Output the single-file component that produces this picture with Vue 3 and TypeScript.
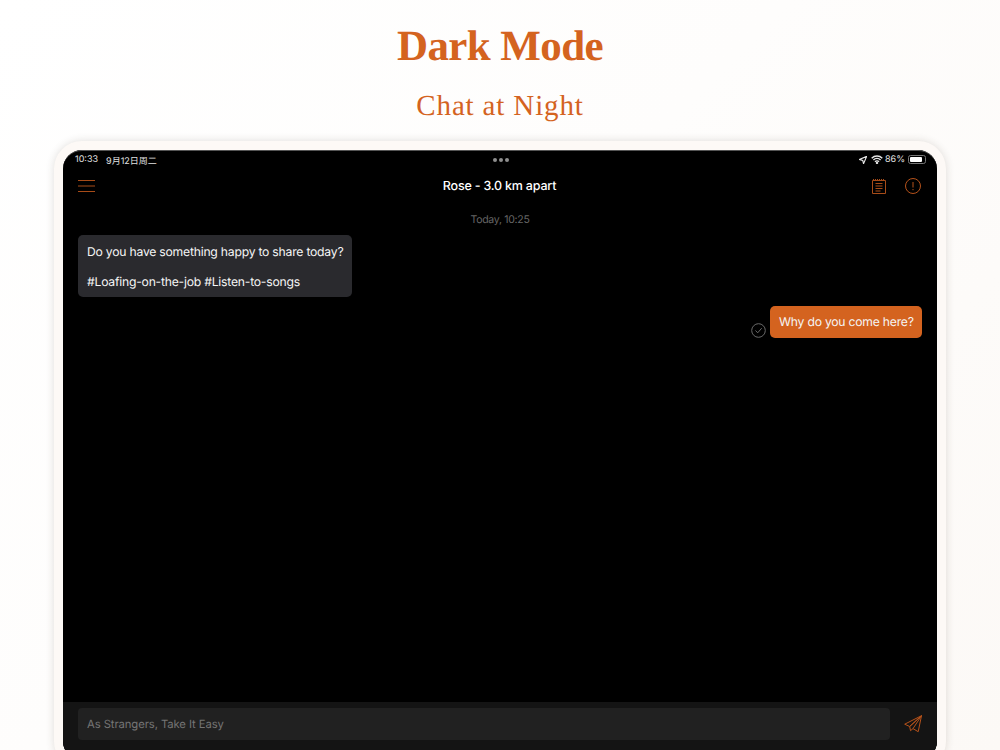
<script setup lang="ts">
const title = 'Dark Mode'
const subtitle = 'Chat at Night'
</script>

<template>
  <div class="page">
    <h1 class="title">{{ title }}</h1>
    <h2 class="subtitle">{{ subtitle }}</h2>
    <div class="device">
      <div class="screen">
        <div class="status">
          <span class="status-left"><span>10:33</span><span>9月12日周二</span></span>
          <span class="dots"><i></i><i></i><i></i></span>
          <span class="status-right">
            <svg width="8" height="8" viewBox="0 0 9 9"><path d="M8.600.4.500 4l3.700.9.900 3.700z" fill="none" stroke="#e6e6e6" stroke-width="1.300"/></svg>
            <svg class="wifi" width="12" height="9" viewBox="0 0 12 9" fill="none" stroke="#e6e6e6" stroke-width="1.400"><path d="M.7 3.200a7.600 7.600 0 0 1 10.600 0M2.400 5a5.200 5.200 0 0 1 7.200 0M4 6.700a2.800 2.800 0 0 1 4 0"/><circle cx="6" cy="8" r=".5" fill="#e6e6e6"/></svg>
            <span class="pct">86%</span>
            <span class="battery"><span class="battery-fill"></span></span>
          </span>
        </div>
        <header class="nav">
          <svg class="menu" width="17" height="12" viewBox="0 0 17 12" stroke="#a84c18" stroke-width="1"><path d="M0 .5h17M0 6h17M0 11.500h17"/></svg>
          <div class="nav-title">Rose - 3.0 km apart</div>
          <div class="nav-actions">
            <svg width="14" height="15" viewBox="0 0 14 15" fill="none" stroke="#a84c18" stroke-width="1"><path d="M.5 1.500h13v13H.5z"/><path d="M1 .5h12" stroke-dasharray="1 1"/><path d="M3.500 4.500h7M3.500 7h7M3.500 9.500h7M3.500 12h5"/></svg>
            <svg width="16" height="16" viewBox="0 0 16 16" fill="none" stroke="#b5521b" stroke-width="1"><circle cx="8" cy="8" r="7.500"/><path d="M8 4v5.500M8 11v1.200"/></svg>
          </div>
        </header>
        <div class="time">Today, 10:25</div>
        <main class="messages">
          <div class="bubble left">
            <p>Do you have something happy to share today?</p>
            <p>#Loafing-on-the-job #Listen-to-songs</p>
          </div>
          <div class="sent">
            <svg class="check" width="15" height="15" viewBox="0 0 15 15" fill="none" stroke="#6a6a6a" stroke-width="1"><circle cx="7.500" cy="7.500" r="6.800"/><path d="M4.500 7.500l2.200 2.300 4-4.600"/></svg>
            <div class="bubble right">Why do you come here?</div>
          </div>
        </main>
        <footer class="composer">
          <div class="input">As Strangers, Take It Easy</div>
          <svg class="send" width="18" height="18" viewBox="0 0 18 18" fill="none" stroke="#b5521b" stroke-width="1"><path d="M17.500.7.700 9.200l5 2.300zM17.500.7l-3.300 16-5.200-3.100zM17.500.7 5.700 11.500l.8 4.200 2.500-2.100"/></svg>
        </footer>
      </div>
    </div>
  </div>
</template>

<style>
html, body { margin: 0; height: 100%; overflow: hidden; }
</style>

<style scoped>
.page {
  width: 1000px;
  height: 750px;
  overflow: hidden;
  display: flex;
  flex-direction: column;
  align-items: center;
  background: linear-gradient(135deg, #ffffff 0%, #fefdfc 45%, #fcf9f6 100%);
  text-rendering: geometricPrecision;
}
.title {
  margin: 22px 0 0;
  font: 700 43px/50px "Liberation Serif", serif;
  color: #d4631f;
  letter-spacing: -0.6px;
}
.subtitle {
  margin: 14px 0 0;
  font: 400 29px/40px "Liberation Serif", serif;
  color: #d4631f;
  letter-spacing: 0.85px;
}
.device {
  margin-top: 15px;
  width: 874px;
  height: 610px;
  flex: none;
  border: 9px solid #fdf9f6;
  border-radius: 28px;
  background: #000;
  box-shadow: 0 0 8px rgba(60, 50, 40, 0.16);
}
.screen {
  height: 100%;
  border-radius: 19px;
  overflow: hidden;
  background: #000;
  display: flex;
  flex-direction: column;
  font-family: Inter, "Noto Sans CJK SC", sans-serif;
  border-top: 1px solid #555;
  box-sizing: border-box;
}
.status {
  flex: none;
  height: 17px;
  padding: 0 11px 0 12px;
  display: grid;
  grid-template-columns: 1fr auto 1fr;
  align-items: center;
  color: #e0e0e0;
  font-size: 9px;
}
.status-left { display: flex; gap: 8px; padding-top: 1px; }
.dots { display: flex; gap: 2px; }
.dots i { width: 4px; height: 4px; border-radius: 50%; background: #8e8e8e; }
.status-right { display: flex; gap: 3px; align-items: center; justify-content: flex-end; }
.wifi { margin-right: -1px; margin-left: 1px; }
.battery {
  width: 18px;
  height: 9px;
  padding: 1px;
  box-sizing: border-box;
  border: 1px solid #777;
  border-radius: 2.500px;
  display: flex;
}
.battery-fill { width: 86%; background: #fff; border-radius: 1px; }
.nav {
  flex: none;
  height: 36px;
  padding: 0 16px 0 15px;
  display: grid;
  grid-template-columns: 1fr auto 1fr;
  align-items: center;
}
.nav-title { color: #fff; font-size: 12.500px; font-weight: 500; letter-spacing: -0.2px; padding-top: 1px; }
.nav-actions { display: flex; justify-content: flex-end; align-items: center; gap: 19px; }
.time {
  flex: none;
  margin-top: 9px;
  text-align: center;
  color: #666;
  font-size: 10.500px;
  line-height: 14px;
  letter-spacing: -0.3px;
}
.messages {
  flex: 1;
  padding: 8px 15px 0;
  display: flex;
  flex-direction: column;
}
.bubble {
  border-radius: 5px;
  color: #f5f5f5;
  font-size: 12.200px;
  line-height: 16px;
  letter-spacing: -0.23px;
}
.bubble p { margin: 0; }
.bubble p + p { margin-top: 13.500px; }
.left {
  align-self: flex-start;
  width: 274px;
  box-sizing: border-box;
  padding: 9px 0 7.500px 9px;
  background: #2a2a2e;
  white-space: nowrap;
}
.sent {
  margin-top: 9px;
  display: flex;
  justify-content: flex-end;
  align-items: flex-end;
  gap: 4px;
}
.right {
  width: 152px;
  box-sizing: border-box;
  padding: 8px 0 8px 9px;
  background: #d4631f;
  white-space: nowrap;
}
.composer {
  flex: none;
  height: 58px;
  padding: 6px 15px 0;
  box-sizing: border-box;
  background: #141414;
  display: flex;
  gap: 14px;
  align-items: flex-start;
}
.input {
  flex: 1;
  height: 32px;
  padding-left: 9px;
  border-radius: 4px;
  background: #212121;
  color: #747474;
  font-size: 11.300px;
  line-height: 32px;
  letter-spacing: -0.1px;
}
.send { margin-top: 7px; flex: none; }
</style>
